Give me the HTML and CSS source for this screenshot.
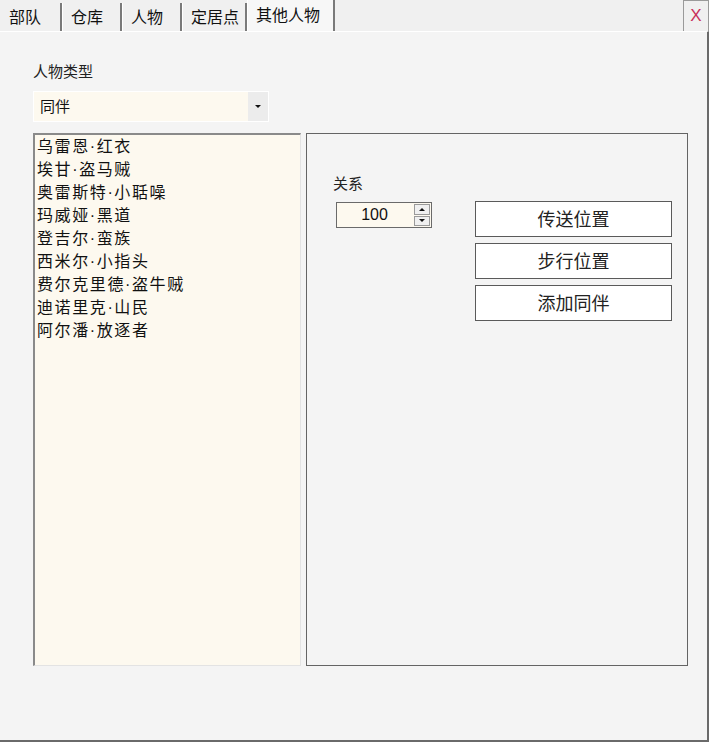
FILE: index.html
```html
<!DOCTYPE html>
<html lang="zh">
<head>
<meta charset="utf-8">
<title>其他人物</title>
<link rel="stylesheet" href="styles.css">
</head>
<body>
<div class="window">
  <div class="tabbar">
    <div class="tab t1">部队</div>
    <div class="tab t2">仓库</div>
    <div class="tab t3">人物</div>
    <div class="tab t4">定居点</div>
    <div class="tab t5 active">其他人物</div>
    <div class="spacer"></div>
    <div class="close">X</div>
  </div>
  <div class="content">
    <div class="label">人物类型</div>
    <div class="combo">
      <div class="combo-text">同伴</div>
      <div class="combo-btn"><span class="tri-down"></span></div>
    </div>
    <div class="panels">
      <div class="listbox">
        <div class="item">乌雷恩·红衣</div>
        <div class="item">埃甘·盗马贼</div>
        <div class="item">奥雷斯特·小聒噪</div>
        <div class="item">玛威娅·黑道</div>
        <div class="item">登吉尔·蛮族</div>
        <div class="item">西米尔·小指头</div>
        <div class="item">费尔克里德·盗牛贼</div>
        <div class="item">迪诺里克·山民</div>
        <div class="item">阿尔潘·放逐者</div>
      </div>
      <div class="group">
        <div class="left-col">
          <div class="small-label">关系</div>
          <div class="spin">
            <div class="spin-value">100</div>
            <div class="spin-btns">
              <div class="spin-btn"><span class="tri-up"></span></div>
              <div class="spin-btn"><span class="tri-down"></span></div>
            </div>
          </div>
        </div>
        <div class="right-col">
          <div class="btn">传送位置</div>
          <div class="btn">步行位置</div>
          <div class="btn">添加同伴</div>
        </div>
      </div>
    </div>
  </div>
</div>
</body>
</html>
```
FILE: styles.css
```css
* { box-sizing: border-box; }
html, body { margin: 0; padding: 0; }
body {
  font-family: "Noto Sans CJK SC", "Liberation Sans", sans-serif;
  color: #1a1a1a;
  background: #f0f0f0;
}
.window {
  width: 709px;
  height: 742px;
  display: flex;
  flex-direction: column;
  background: #f0f0f0;
}
.tabbar {
  height: 31px;
  display: flex;
  align-items: flex-end;
  flex: none;
}
.tab {
  height: 28px;
  font-size: 16px;
  line-height: 26px;
  padding-left: 8px;
  border-left: 1px solid #ffffff;
  border-right: 2px solid #7a7a7a;
  background: #f0f0f0;
  color: #111;
}
.t1 { width: 62px; border-left: none; padding-left: 9px; }
.t2 { width: 60px; }
.t3 { width: 60px; }
.t4 { width: 65px; }
.t5 { width: 88px; }
.tab.active {
  height: 31px;
  background: #f7f7f7;
  line-height: 28px;
  border-left: 1px solid #ffffff;
  border-right: 2px solid #7a7a7a;
}
.spacer { flex: 1; }
.close {
  width: 26px;
  height: 31px;
  border: 1px solid #9a9a9a;
  border-bottom: none;
  color: #c8305a;
  font-family: "Liberation Sans", sans-serif;
  font-size: 17px;
  line-height: 30px;
  text-align: center;
  background: #f0f0f0;
}
.content {
  flex: 1;
  background: #f4f4f4;
  border-top: 1px solid #ffffff;
  border-right: 2px solid #6a6a6a;
  border-bottom: 2px solid #6a6a6a;
  padding-left: 33px;
}
.label {
  margin-top: 29px;
  font-size: 15px;
  line-height: 20px;
  color: #222;
}
.combo {
  margin-top: 10px;
  width: 236px;
  height: 31px;
  border: 1px solid #ffffff;
  display: flex;
  background: #fdf9ef;
}
.combo-text {
  flex: 1;
  font-size: 15px;
  line-height: 28px;
  padding-left: 6px;
  color: #111;
}
.combo-btn {
  width: 20px;
  background: #ececec;
  display: flex;
  align-items: center;
  justify-content: center;
}
.tri-down {
  width: 0; height: 0;
  border-left: 3px solid transparent;
  border-right: 3px solid transparent;
  border-top: 3px solid #111;
}
.tri-up {
  width: 0; height: 0;
  border-left: 3px solid transparent;
  border-right: 3px solid transparent;
  border-bottom: 3px solid #111;
}
.panels {
  margin-top: 11px;
  display: flex;
  gap: 5px;
}
.listbox {
  width: 268px;
  height: 533px;
  background: #fdf9ef;
  border-top: 2px solid #8a8a8a;
  border-left: 2px solid #8a8a8a;
  border-right: 1px solid #e3e3e3;
  border-bottom: 1px solid #e3e3e3;
  padding-top: 0;
  padding-left: 2px;
}
.item {
  font-family: "Liberation Sans", "Noto Sans CJK SC", sans-serif;
  font-size: 16px;
  letter-spacing: 1.6px;
  line-height: 23px;
  color: #111;
  white-space: nowrap;
}
.group {
  width: 382px;
  height: 533px;
  border: 1px solid #646464;
  display: flex;
}
.left-col {
  padding-left: 26px;
  padding-top: 39px;
}
.small-label {
  font-size: 15px;
  line-height: 20px;
  color: #222;
}
.spin {
  margin-top: 9px;
  margin-left: 3px;
  width: 96px;
  height: 26px;
  border: 1px solid #6a6a6a;
  background: #fdf9ef;
  display: flex;
}
.spin-value {
  flex: 1;
  text-align: center;
  font-family: "Liberation Sans", sans-serif;
  font-size: 16px;
  line-height: 24px;
  color: #111;
  padding-right: 2px;
}
.spin-btns {
  width: 17px;
  display: flex;
  flex-direction: column;
  padding: 1px 1px 1px 0;
  gap: 1px;
}
.spin-btn {
  flex: 1;
  background: #f0f0f0;
  border: 1px solid #9a9a9a;
  display: flex;
  align-items: center;
  justify-content: center;
}
.right-col {
  margin-left: auto;
  margin-right: 15px;
  padding-top: 67px;
  display: flex;
  flex-direction: column;
  gap: 6px;
}
.btn {
  width: 197px;
  height: 36px;
  background: #ffffff;
  border: 1px solid #5a5a5a;
  text-align: center;
  font-size: 18px;
  line-height: 33px;
  color: #222;
}
```
